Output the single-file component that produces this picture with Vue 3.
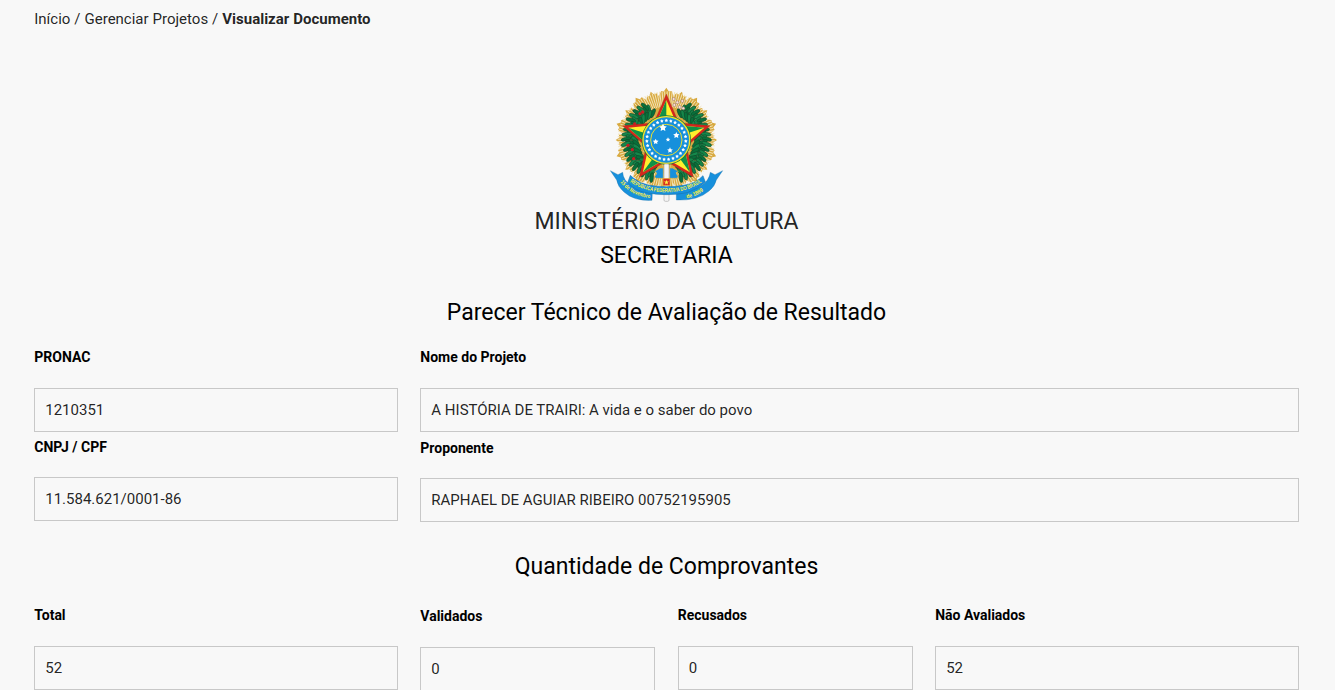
<script setup>
const projectRows = [
  [
    { label: 'PRONAC', value: '1210351', size: 'w30' },
    { label: 'Nome do Projeto', value: 'A HISTÓRIA DE TRAIRI: A vida e o saber do povo', size: 'w70' },
  ],
  [
    { label: 'CNPJ / CPF', value: '11.584.621/0001-86', size: 'w30' },
    { label: 'Proponente', value: 'RAPHAEL DE AGUIAR RIBEIRO 00752195905', size: 'w70 lowered' },
  ],
]
const receipts = [
  { label: 'Total', value: '52', size: 'w30' },
  { label: 'Validados', value: '0', size: 'w20 lowered' },
  { label: 'Recusados', value: '0', size: 'w20' },
  { label: 'Não Avaliados', value: '52', size: 'w30' },
]

const CX = 199
const CY = 180
const polar = (r, deg, cx = CX, cy = CY) => {
  const a = (deg * Math.PI) / 180
  return [cx + r * Math.sin(a), cy - r * Math.cos(a)]
}
const pts = (list) => list.map((p) => p.map((n) => n.toFixed(1)).join(',')).join(' ')
const starShape = (cx, cy, r, inner = 0.4) =>
  pts(Array.from({ length: 10 }, (_, i) => polar(i % 2 ? r * inner : r, i * 36, cx, cy)))

// Golden rays: blocks with a stepped, pointed outer edge
const rays = Array.from({ length: 20 }, (_, i) => {
  const a = i * 18
  const r = i % 2 ? 144 : 149
  return pts([polar(60, a - 9), polar(r - 13, a - 9), polar(r - 1, a - 6), polar(r - 3, a - 3), polar(r + 8, a), polar(r - 3, a + 3), polar(r - 1, a + 6), polar(r - 13, a + 9), polar(60, a + 9)])
})
const rayLines = Array.from({ length: 120 }, (_, i) => {
  const [x1, y1] = polar(100, i * 3 + 1)
  const [x2, y2] = polar(146, i * 3 + 1)
  return { x1, y1, x2, y2 }
})

// Coffee and tobacco branches, mirrored around the vertical axis
const leaves = []
for (let a = 30; a <= 159; a += 7) {
  for (const [r, turn] of [[92, -35], [107, 0], [120, 38]]) {
    for (const side of [-1, 1]) {
      const [x, y] = polar(r + ((a * 3) % 5) - 2, side * (a + (r - 107) * 0.2))
      leaves.push({ x, y, rot: side * (a + turn - 20), dark: (a + r) % 2 === 0 })
    }
  }
}
const berries = [[120, 101], [104, 132], [97, 209], [101, 236], [84, 196], [128, 96]]
const blossoms = [[221, 57], [232, 67], [247, 63], [239, 81], [223, 75], [250, 85]]

const bigStar = starShape(CX, CY, 138, 0.46)
const innerStar = starShape(CX, CY, 120, 0.46)
const facets = Array.from({ length: 5 }, (_, i) => pts([[CX, CY], polar(120, i * 72), polar(55, i * 72 - 36)]))
const ringStars = Array.from({ length: 27 }, (_, i) => {
  const [x, y] = polar(58.5, (i * 360) / 27)
  return starShape(x, y, 5.5, 0.6)
})
const southernCross = [[189, 143, 12], [229, 166, 10], [167, 185, 9], [204, 179, 7], [210, 211, 9]].map(([x, y, r]) => starShape(x, y, r, 0.5))
</script>

<template>
  <main class="page">
    <nav class="breadcrumb">Início / Gerenciar Projetos / <b>Visualizar Documento</b></nav>

    <header class="heading">
      <svg class="emblem" viewBox="0 0 405 390" aria-label="Brasão da República">
        <g fill="#d8a93f">
          <polygon v-for="(p, i) in rays" :key="i" :points="p" />
        </g>
        <g stroke="#f3e3b6" stroke-width="3">
          <line v-for="(l, i) in rayLines" :key="i" v-bind="l" />
        </g>
        <g stroke="#12482a" stroke-width="1.8">
          <ellipse
            v-for="(l, i) in leaves"
            :key="i"
            rx="5.5"
            ry="15"
            :fill="l.dark ? '#08703a' : '#15874a'"
            :transform="`translate(${l.x} ${l.y}) rotate(${l.rot})`"
          />
        </g>
        <circle v-for="(b, i) in berries" :key="'b' + i" :cx="b[0]" :cy="b[1]" r="5" fill="#c51d24" />
        <circle v-for="(b, i) in blossoms" :key="'f' + i" :cx="b[0]" :cy="b[1]" r="4.5" fill="#f9dfd5" stroke="#8d6960" stroke-width="1.5" />

        <polygon :points="bigStar" fill="#d5261d" stroke="#9b3518" stroke-width="1" />
        <polygon :points="innerStar" fill="#fff02d" />
        <polygon v-for="(p, i) in facets" :key="'s' + i" :points="p" fill="#119247" />

        <circle :cx="CX" :cy="CY" r="74" fill="#0e7a45" />
        <circle :cx="CX" :cy="CY" r="70" fill="#1790dc" stroke="#f4e22b" stroke-width="4" />
        <circle :cx="CX" :cy="CY" r="47" fill="#1790dc" stroke="#e9df31" stroke-width="3" />
        <polygon v-for="(p, i) in ringStars" :key="'r' + i" :points="p" fill="#fff" />
        <polygon v-for="(p, i) in southernCross" :key="'c' + i" :points="p" fill="#fff" />

        <path d="M180 264h10v31h-22q-8-5 0-11 5-6-4-10zM209 264h9l17 10q-10 3-5 9 8 7 0 12h-21z" fill="#1790dc" stroke="#dfb344" stroke-width="2" />
        <rect x="192" y="252" width="15" height="112" rx="4" fill="#f4f4f4" stroke="#adadad" stroke-width="2" />
        <path d="M31 272L54 284L68 277Q69 302 96 318Q121 333 157 337L156 361Q102 364 72 336Q53 320 50 300Z" fill="#1790dc" stroke="#176da5" stroke-width="1" />
        <path d="M368 272L345 284L331 277Q327 304 302 318Q277 333 229 338L229 360Q292 363 326 334Q345 319 349 300Z" fill="#1790dc" stroke="#176da5" stroke-width="1" />
        <path d="M91 286Q112 307 145 315Q199 325 255 315Q288 309 309 287L316 306Q295 326 262 338Q199 350 137 338Q105 331 83 308Z" fill="#1790dc" stroke="#176da5" stroke-width="1.5" />
        <rect x="189" y="295" width="21" height="22" fill="#d92b20" stroke="#e5b73f" stroke-width="2" />
        <polygon :points="starShape(199.5, 307, 8)" fill="#fff04a" />
        <path id="motto" d="M90 306Q140 338 199 337Q263 337 311 303" fill="none" />
        <path id="date-left" d="M61 306Q88 345 154 356" fill="none" />
        <path id="date-right" d="M260 355Q292 349 317 327" fill="none" />
        <g class="ribbon-text">
          <text><textPath href="#motto" textLength="228" lengthAdjust="spacingAndGlyphs">REPÚBLICA FEDERATIVA DO BRASIL</textPath></text>
          <text><textPath href="#date-left" textLength="104" lengthAdjust="spacingAndGlyphs">15 de Novembro</textPath></text>
          <text><textPath href="#date-right" textLength="56" lengthAdjust="spacingAndGlyphs">de 1889</textPath></text>
        </g>
      </svg>
      <div class="ministry">MINISTÉRIO DA CULTURA</div>
      <div class="secretary">SECRETARIA</div>
    </header>

    <h1 class="title">Parecer Técnico de Avaliação de Resultado</h1>
    <section v-for="(row, r) in projectRows" :key="r" class="row" :class="'row-' + r">
      <div v-for="f in row" :key="f.label" class="cell" :class="f.size">
        <div class="label">{{ f.label }}</div>
        <div class="value">{{ f.value }}</div>
      </div>
    </section>

    <h2 class="title counts">Quantidade de Comprovantes</h2>
    <section class="row">
      <div v-for="f in receipts" :key="f.label" class="cell" :class="f.size">
        <div class="label">{{ f.label }}</div>
        <div class="value">{{ f.value }}</div>
      </div>
    </section>
  </main>
</template>

<style>
html,
body {
  background: #f8f8f8;
  overflow: hidden;
}
</style>

<style scoped>
.page {
  box-sizing: border-box;
  height: 690px;
  overflow: hidden;
  padding: 8px 25px 0 23px;
  background: #f8f8f8;
  font-family: Roboto, sans-serif;
  font-size: 15px;
  color: rgba(0, 0, 0, 0.87);
}
.breadcrumb {
  height: 22px;
  padding-left: 11.25px;
  line-height: 22px;
  word-spacing: 0.25px;
}
.heading {
  padding-top: 50px;
  text-align: center;
}
.emblem {
  display: block;
  width: 135px;
  height: 130px;
  margin: 0 auto -5px;
  transform: translateX(1px);
}
.ribbon-text {
  fill: #fff13c;
  font: 700 17px "Liberation Sans", sans-serif;
}
.ministry,
.secretary,
.title {
  font-size: 23px;
  font-weight: 400;
  line-height: 34px;
}
.secretary,
.title,
.label {
  color: #000;
}
.title {
  margin: 23px 0 16px;
  text-align: center;
}
.row {
  display: flex;
  height: 90px;
}
.row-1 {
  height: 89px;
}
.cell {
  box-sizing: border-box;
  padding: 0 11.25px;
}
.w30 {
  width: 30%;
}
.w20 {
  width: 20%;
}
.w70 {
  width: 70%;
}
.lowered {
  padding-top: 1px;
}
.label {
  height: 42px;
  font-size: 14px;
  font-weight: 700;
  line-height: 22px;
}
.row-1 .label {
  height: 41px;
}
.value {
  box-sizing: border-box;
  height: 44px;
  padding: 0 10px;
  border: 1px solid #c8c8c8;
  line-height: 42px;
}
.counts {
  margin: 25px 0 20px;
}
</style>
